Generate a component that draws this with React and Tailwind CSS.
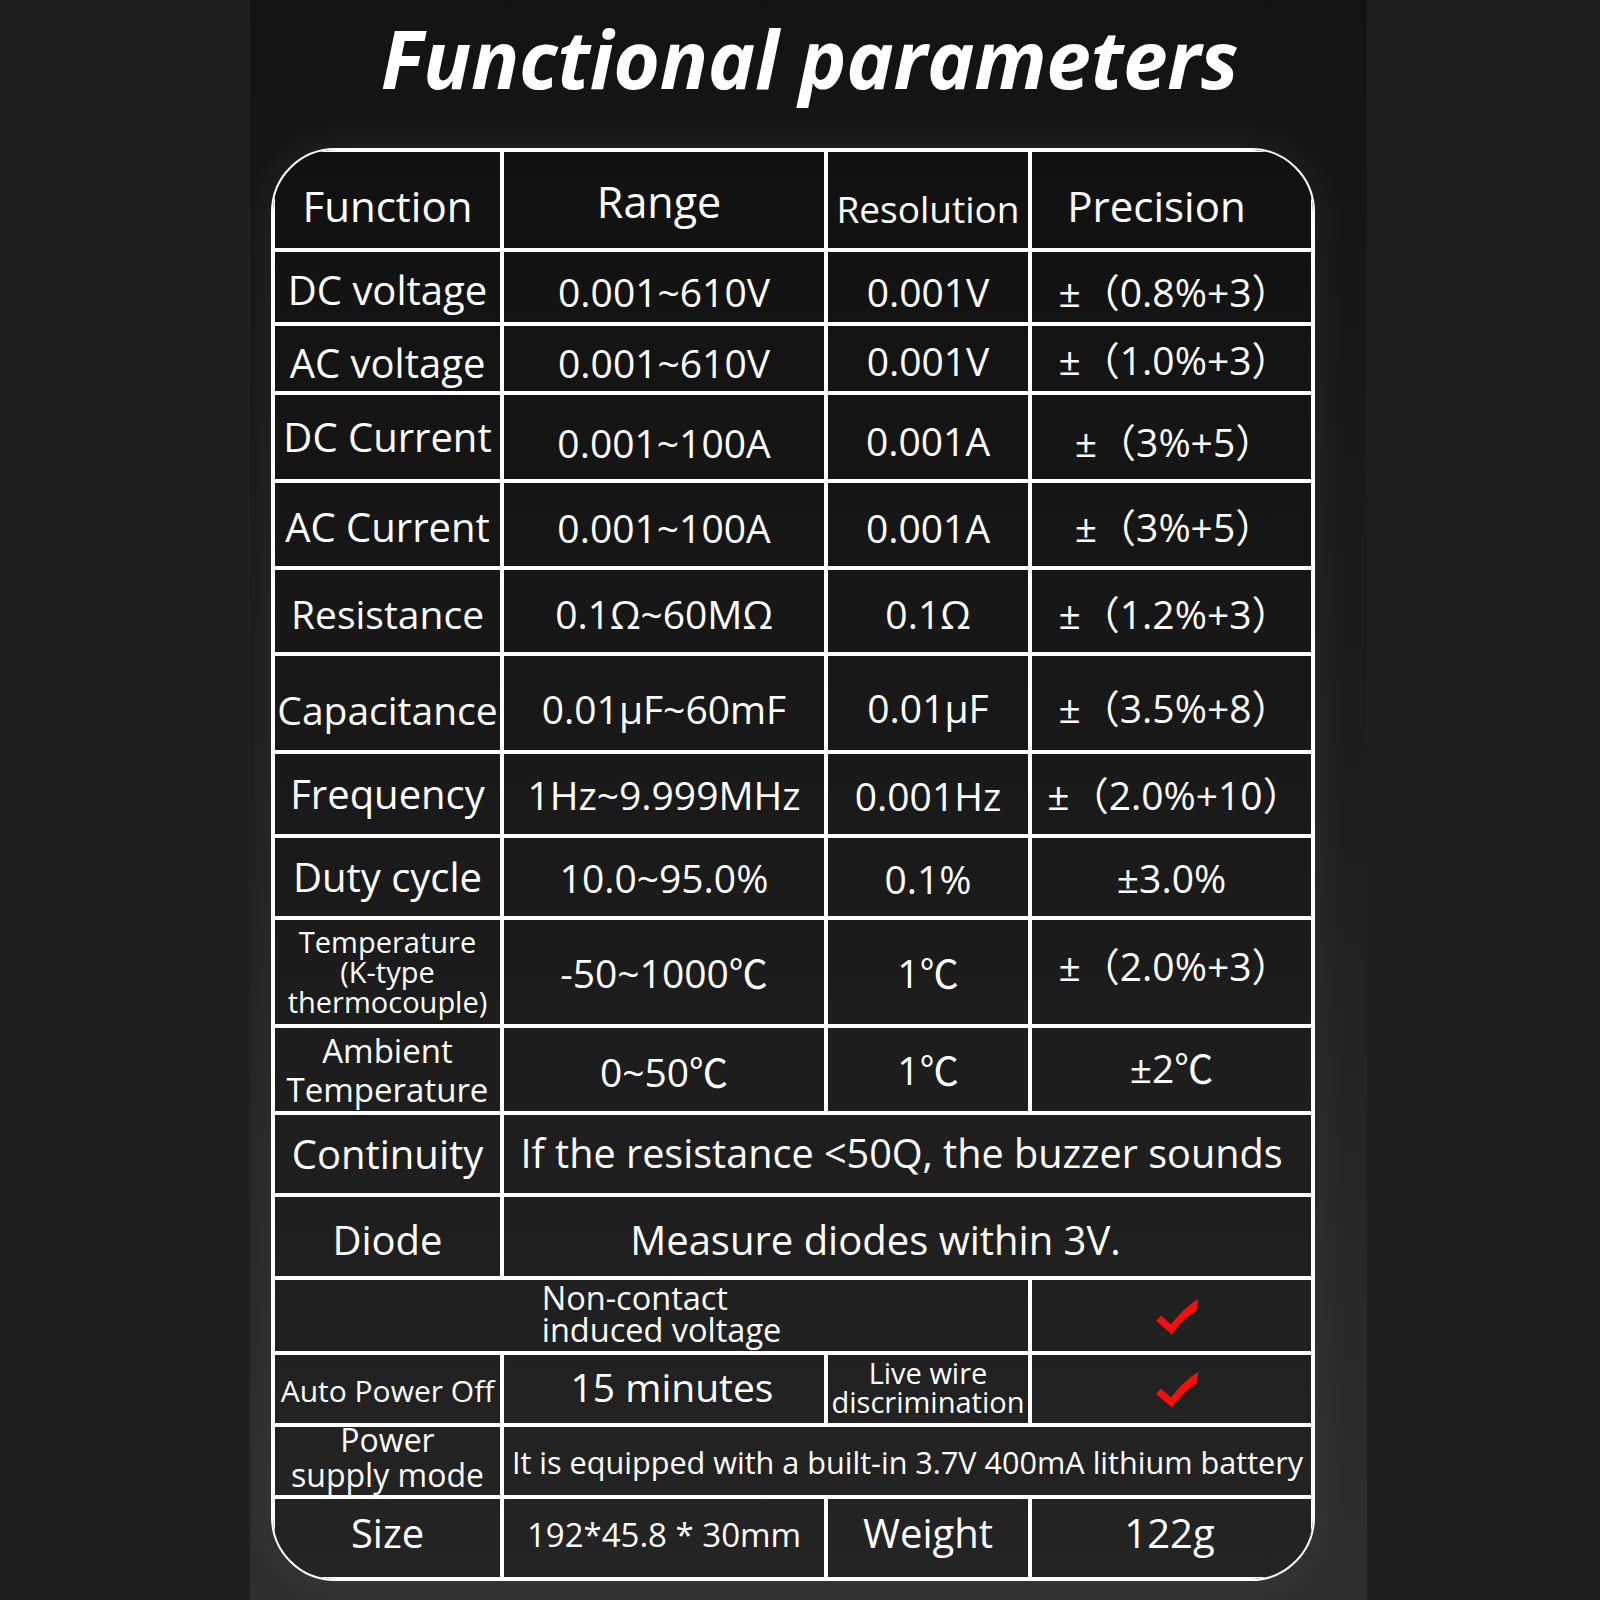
import React from "react";

const FONT = { fontFamily: '"Open Sans", "Noto Sans CJK SC", sans-serif' };

function Check() {
  return (
    <svg width="44" height="36" viewBox="0 0 44 36" className="block">
      <path
        d="M0 22 L5 16.5 L15 25.5 C23 15 32 6 42.5 0 L40.5 12 C30 18 22.5 26 16 35.5 Z"
        fill="#f40f0f"
      />
    </svg>
  );
}

function C({ children, className = "" }) {
  return (
    <div
      className={
        "border-2 border-white flex items-center justify-center text-center text-white whitespace-nowrap overflow-hidden " +
        className
      }
    >
      {children}
    </div>
  );
}

export default function App() {
  return (
    <div className="w-[1600px] h-[1600px] bg-[#1f1f1f] flex" style={FONT}>
      <div className="ml-[250px] w-[1117px] h-[1600px] flex flex-col bg-gradient-to-b from-[#131313] via-[#1d1e1f] to-[#2e2f30]">
        <div className="pt-[18px] h-[148px] flex justify-center">
          <h1 className="text-white text-[80px] leading-none font-bold italic tracking-[-0.3px] pl-[2px]">
            Functional parameters
          </h1>
        </div>
        <div className="ml-[21px] w-[1044px] h-[1433px] border-2 border-white rounded-[64px] overflow-hidden bg-gradient-to-b from-[#111111] to-[#242424] shadow-[0_0_40px_rgba(255,255,255,0.07)] grid grid-cols-[229px_324px_204px_283px] grid-rows-[100px_74px_69px_88px_87px_86px_98px_84px_82px_108px_87px_82px_83px_75px_72px_72px_82px] text-[39px] leading-none">
          {/* header */}
          <C className="pt-[12px] text-[42px]">Function</C>
          <C className="pt-[2px] pr-[10px] text-[43px]">Range</C>
          <C className="pt-[16px] text-[37px]">Resolution</C>
          <C className="pt-[12px] text-[42px] pr-[30px]">Precision</C>

          <C className="pt-[6px] text-[40px]">DC voltage</C>
          <C className="pt-[8px]">0.001~610V</C>
          <C className="pt-[8px]">0.001V</C>
          <C className="pt-[8px] pl-[6px]">±（0.8%+3）</C>

          <C className="pt-[8px] text-[40px]">AC voltage</C>
          <C className="pt-[8px]">0.001~610V</C>
          <C className="pt-[4px]">0.001V</C>
          <C className="pt-[2px] pl-[6px]">±（1.0%+3）</C>

          <C className="pt-[0px] text-[40px]">DC Current</C>
          <C className="pt-[10px]">0.001~100A</C>
          <C className="pt-[6px]">0.001A</C>
          <C className="pt-[8px] pl-[6px]">±（3%+5）</C>

          <C className="pt-[4px] text-[40px]">AC Current</C>
          <C className="pt-[6px]">0.001~100A</C>
          <C className="pt-[6px]">0.001A</C>
          <C className="pt-[4px] pl-[6px]">±（3%+5）</C>

          <C className="pt-[4px]">Resistance</C>
          <C className="pt-[5px]">0.1Ω~60MΩ</C>
          <C className="pt-[5px]">0.1Ω</C>
          <C className="pt-[5px] pl-[6px]">±（1.2%+3）</C>

          <C className="pt-[12px]">Capacitance</C>
          <C className="pt-[10px]">0.01μF~60mF</C>
          <C className="pt-[8px]">0.01μF</C>
          <C className="pt-[8px] pl-[6px]">±（3.5%+8）</C>

          <C className="pt-[0px] text-[40px]">Frequency</C>
          <C className="pt-[0px]">1Hz~9.999MHz</C>
          <C className="pt-[2px] text-[39px]">0.001Hz</C>
          <C className="pt-[0px] pl-[6px]">±（2.0%+10）</C>

          <C className="pt-[0px] text-[40px]">Duty cycle</C>
          <C className="pt-[0px]">10.0~95.0%</C>
          <C className="pt-[2px]">0.1%</C>
          <C className="pt-[0px]">±3.0%</C>

          <C className="flex-col text-[29px] leading-[30px] pt-[0px]">
            <span>Temperature</span>
            <span>(K-type</span>
            <span>thermocouple)</span>
          </C>
          <C className="pt-[0px]">-50~1000℃</C>
          <C className="pt-[0px]">1℃</C>
          <C className="pb-[14px] pl-[6px]">±（2.0%+3）</C>

          <C className="flex-col text-[33px] leading-[39px] pt-[0px]">
            <span>Ambient</span>
            <span>Temperature</span>
          </C>
          <C className="pt-[4px]">0~50℃</C>
          <C className="pt-[0px]">1℃</C>
          <C className="pb-[4px]">±2℃</C>

          <C className="pt-[0px] text-[40px]">Continuity</C>
          <C className="col-span-3 pt-[0px] pr-[12px] text-[39.6px]">If the resistance &lt;50Q, the buzzer sounds</C>

          <C className="pt-[6px] text-[40px]">Diode</C>
          <C className="col-span-3 pt-[6px] pr-[64px] text-[40px]">Measure diodes within 3V.</C>

          <C className="col-span-3 pl-[20px] pb-[4px]">
            <div className="text-left text-[32.5px] leading-[32px] flex flex-col">
              <span>Non-contact</span>
              <span>induced voltage</span>
            </div>
          </C>
          <C className="pl-[12px] pt-[2px]">
            <Check />
          </C>

          <C className="text-[30px] pt-[4px]">Auto Power Off</C>
          <C className="pb-[6px] pl-[16px]">15 minutes</C>
          <C className="flex-col text-[29px] leading-[29px] pb-[4px]">
            <span>Live wire</span>
            <span>discrimination</span>
          </C>
          <C className="pl-[12px] pt-[2px]">
            <Check />
          </C>

          <C className="flex-col text-[32px] leading-[35px] pb-[8px]">
            <span>Power</span>
            <span>supply mode</span>
          </C>
          <C className="col-span-3 text-[30.6px] pt-[2px]">
            It is equipped with a built-in 3.7V 400mA lithium battery
          </C>

          <C className="pb-[10px] text-[40px]">Size</C>
          <C className="pb-[8px] text-[33px]">192*45.8 * 30mm</C>
          <C className="pb-[10px] text-[40px]">Weight</C>
          <C className="pb-[10px] pr-[4px] text-[40px]">122g</C>
        </div>
      </div>
    </div>
  );
}
